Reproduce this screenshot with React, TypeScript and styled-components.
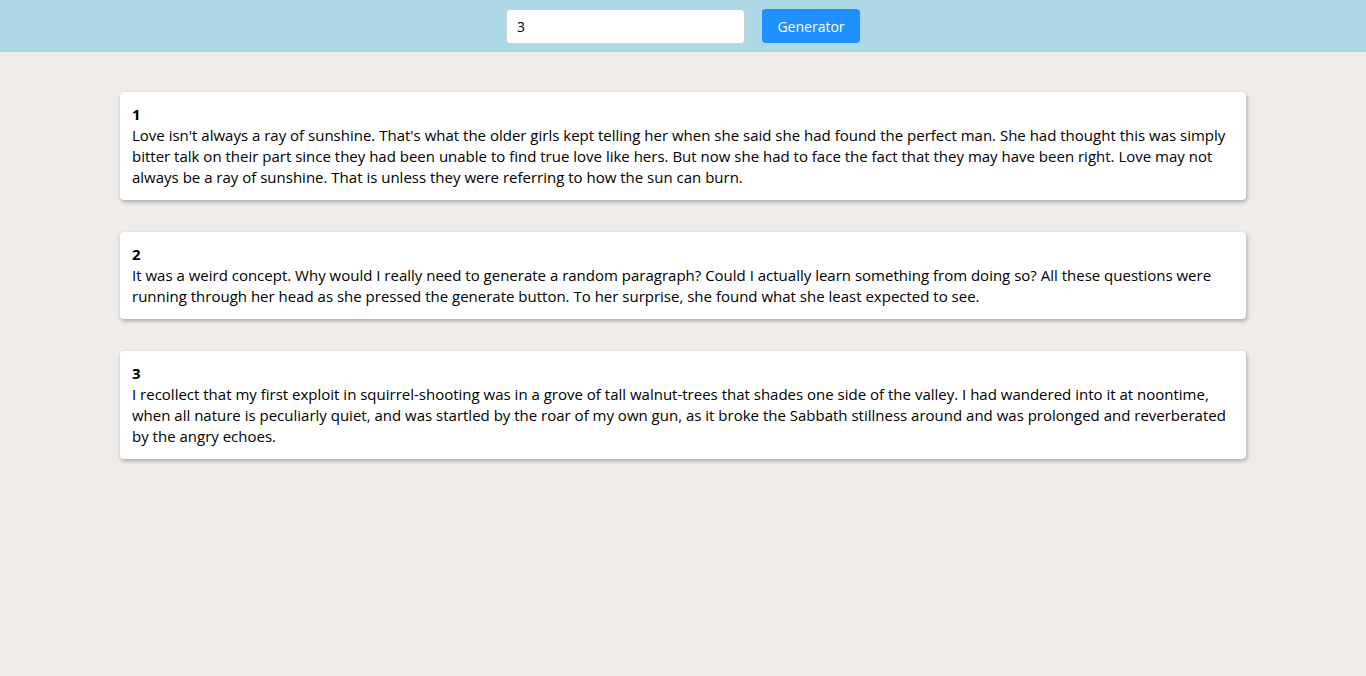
import React, { useState } from "react";
import styled, { createGlobalStyle } from "styled-components";

const paragraphs = [
  "Love isn't always a ray of sunshine. That's what the older girls kept telling her when she said she had found the perfect man. She had thought this was simply bitter talk on their part since they had been unable to find true love like hers. But now she had to face the fact that they may have been right. Love may not always be a ray of sunshine. That is unless they were referring to how the sun can burn.",
  "It was a weird concept. Why would I really need to generate a random paragraph? Could I actually learn something from doing so? All these questions were running through her head as she pressed the generate button. To her surprise, she found what she least expected to see.",
  "I recollect that my first exploit in squirrel-shooting was in a grove of tall walnut-trees that shades one side of the valley. I had wandered into it at noontime, when all nature is peculiarly quiet, and was startled by the roar of my own gun, as it broke the Sabbath stillness around and was prolonged and reverberated by the angry echoes.",
];

const GlobalStyle = createGlobalStyle`
  * {
    box-sizing: border-box;
  }
  html, body {
    margin: 0;
    padding: 0;
    background-color: #f0ecea;
    font-family: "Open Sans", "Noto Sans", sans-serif;
    color: #000;
  }
`;

const Page = styled.div`
  min-height: 676px;
  background-color: #f0ecea;
`;

const Header = styled.header`
  display: flex;
  justify-content: center;
  align-items: center;
  gap: 17px;
  height: 52px;
  background-color: #add8e6;
`;

const CountInput = styled.input`
  width: 239px;
  height: 35px;
  padding: 0 10px;
  border: 1px solid #cfcfcf;
  border-radius: 4px;
  background: #fff;
  font-family: "Open Sans", sans-serif;
  font-size: 14px;
  color: #000;
  outline: none;
`;

const GenerateButton = styled.button`
  width: 98px;
  height: 34px;
  border: none;
  border-radius: 4px;
  background-color: #1e90ff;
  color: #fff;
  font-family: "Open Sans", sans-serif;
  font-size: 14px;
  cursor: pointer;
`;

const List = styled.main`
  display: flex;
  flex-direction: column;
  gap: 32px;
  padding: 40px 120px;
`;

const Card = styled.section`
  background: #fff;
  border-radius: 4px;
  padding: 12px;
  box-shadow: 1px 2px 4px rgba(0, 0, 0, 0.3);
  font-size: 15px;
  line-height: 21px;
`;

const Num = styled.div`
  font-weight: 700;
`;

const Text = styled.p`
  margin: 0;
`;

export default function App() {
  const [count, setCount] = useState("3");
  const [shown, setShown] = useState(3);

  return (
    <Page>
      <GlobalStyle />
      <Header>
        <CountInput
          type="text"
          value={count}
          onChange={(e) => setCount(e.target.value)}
        />
        <GenerateButton onClick={() => setShown(Number(count) || 0)}>
          Generator
        </GenerateButton>
      </Header>
      <List>
        {paragraphs.slice(0, shown).map((p, i) => (
          <Card key={i}>
            <Num>{i + 1}</Num>
            <Text>{p}</Text>
          </Card>
        ))}
      </List>
    </Page>
  );
}
